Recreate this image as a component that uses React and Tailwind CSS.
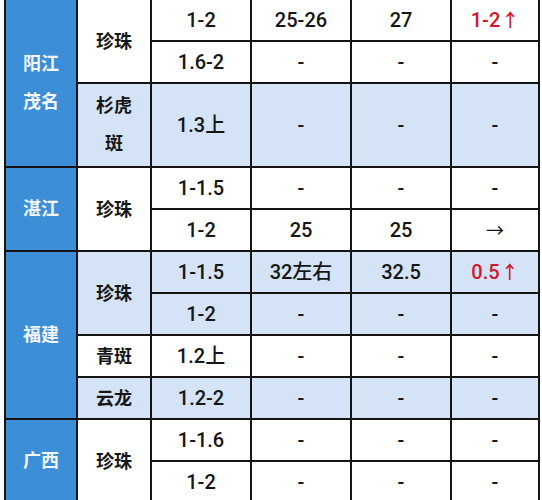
import React from "react";

const BLUE = "bg-[#d4e4f6]";

const Cell = ({ pos, bg = "bg-white", className = "", children }) => (
  <div className={`${pos} ${bg} flex items-center justify-center text-center ${className}`}>
    {children}
  </div>
);

const Region = ({ pos, children }) => (
  <div className={`${pos} bg-[#3c8ed7] flex items-center justify-center text-center text-[#f3f7fc] font-bold text-[18px] leading-[38px]`}>
    <span>{children}</span>
  </div>
);

const Up = ({ children }) => (
  <span className="text-[#d3152d]">
    {children}
    <span className="ml-[1px] font-medium text-[18px]">↑</span>
  </span>
);

export default function App() {
  return (
    <div className="w-[542px] h-[500px] overflow-hidden bg-white pl-[4px] font-['Roboto','Noto_Sans_CJK_SC',sans-serif] text-[20px] font-medium text-[#161616]">
      <div className="w-[536px] grid grid-cols-[70px_72px_98px_98px_98px_86px] grid-rows-[repeat(12,40px)] gap-[2px] px-[2px] pb-[2px] bg-[#141414]">
        {/* 阳江 茂名 */}
        <Region pos="col-start-1 row-start-1 row-span-4">
          阳江
          <br />
          茂名
        </Region>
        <Cell pos="col-start-2 row-start-1 row-span-2" className="font-bold text-[18px]">珍珠</Cell>
        <Cell pos="col-start-3 row-start-1">1-2</Cell>
        <Cell pos="col-start-4 row-start-1">25-26</Cell>
        <Cell pos="col-start-5 row-start-1">27</Cell>
        <Cell pos="col-start-6 row-start-1"><Up>1-2</Up></Cell>
        <Cell pos="col-start-3 row-start-2">1.6-2</Cell>
        <Cell pos="col-start-4 row-start-2">-</Cell>
        <Cell pos="col-start-5 row-start-2">-</Cell>
        <Cell pos="col-start-6 row-start-2">-</Cell>
        <Cell pos="col-start-2 row-start-3 row-span-2" bg={BLUE} className="font-bold text-[18px] leading-[38px]">
          <span>
            杉虎
            <br />
            斑
          </span>
        </Cell>
        <Cell pos="col-start-3 row-start-3 row-span-2" bg={BLUE}>1.3上</Cell>
        <Cell pos="col-start-4 row-start-3 row-span-2" bg={BLUE}>-</Cell>
        <Cell pos="col-start-5 row-start-3 row-span-2" bg={BLUE}>-</Cell>
        <Cell pos="col-start-6 row-start-3 row-span-2" bg={BLUE}>-</Cell>

        {/* 湛江 */}
        <Region pos="col-start-1 row-start-5 row-span-2">湛江</Region>
        <Cell pos="col-start-2 row-start-5 row-span-2" className="font-bold text-[18px]">珍珠</Cell>
        <Cell pos="col-start-3 row-start-5">1-1.5</Cell>
        <Cell pos="col-start-4 row-start-5">-</Cell>
        <Cell pos="col-start-5 row-start-5">-</Cell>
        <Cell pos="col-start-6 row-start-5">-</Cell>
        <Cell pos="col-start-3 row-start-6">1-2</Cell>
        <Cell pos="col-start-4 row-start-6">25</Cell>
        <Cell pos="col-start-5 row-start-6">25</Cell>
        <Cell pos="col-start-6 row-start-6" className="font-normal text-[18px]">→</Cell>

        {/* 福建 */}
        <Region pos="col-start-1 row-start-7 row-span-4">福建</Region>
        <Cell pos="col-start-2 row-start-7 row-span-2" bg={BLUE} className="font-bold text-[18px]">珍珠</Cell>
        <Cell pos="col-start-3 row-start-7" bg={BLUE}>1-1.5</Cell>
        <Cell pos="col-start-4 row-start-7" bg={BLUE}>32左右</Cell>
        <Cell pos="col-start-5 row-start-7" bg={BLUE}>32.5</Cell>
        <Cell pos="col-start-6 row-start-7" bg={BLUE}><Up>0.5</Up></Cell>
        <Cell pos="col-start-3 row-start-8" bg={BLUE}>1-2</Cell>
        <Cell pos="col-start-4 row-start-8" bg={BLUE}>-</Cell>
        <Cell pos="col-start-5 row-start-8" bg={BLUE}>-</Cell>
        <Cell pos="col-start-6 row-start-8" bg={BLUE}>-</Cell>
        <Cell pos="col-start-2 row-start-9" className="font-bold text-[18px]">青斑</Cell>
        <Cell pos="col-start-3 row-start-9">1.2上</Cell>
        <Cell pos="col-start-4 row-start-9">-</Cell>
        <Cell pos="col-start-5 row-start-9">-</Cell>
        <Cell pos="col-start-6 row-start-9">-</Cell>
        <Cell pos="col-start-2 row-start-10" bg={BLUE} className="font-bold text-[18px]">云龙</Cell>
        <Cell pos="col-start-3 row-start-10" bg={BLUE}>1.2-2</Cell>
        <Cell pos="col-start-4 row-start-10" bg={BLUE}>-</Cell>
        <Cell pos="col-start-5 row-start-10" bg={BLUE}>-</Cell>
        <Cell pos="col-start-6 row-start-10" bg={BLUE}>-</Cell>

        {/* 广西 */}
        <Region pos="col-start-1 row-start-11 row-span-2">广西</Region>
        <Cell pos="col-start-2 row-start-11 row-span-2" className="font-bold text-[18px]">珍珠</Cell>
        <Cell pos="col-start-3 row-start-11">1-1.6</Cell>
        <Cell pos="col-start-4 row-start-11">-</Cell>
        <Cell pos="col-start-5 row-start-11">-</Cell>
        <Cell pos="col-start-6 row-start-11">-</Cell>
        <Cell pos="col-start-3 row-start-12">1-2</Cell>
        <Cell pos="col-start-4 row-start-12">-</Cell>
        <Cell pos="col-start-5 row-start-12">-</Cell>
        <Cell pos="col-start-6 row-start-12">-</Cell>
      </div>
    </div>
  );
}
